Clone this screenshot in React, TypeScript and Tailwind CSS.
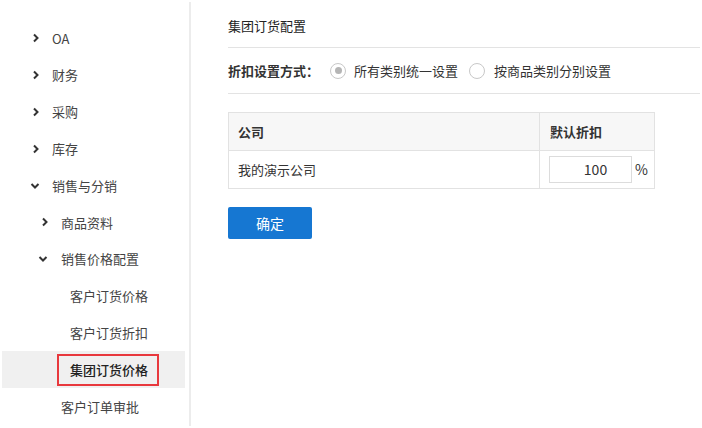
import React from "react";

const font = { fontFamily: '"Noto Sans CJK SC", "Noto Sans", sans-serif' };

function ChevRight({ className = "" }: { className?: string }) {
  return (
    <svg width="8" height="10" viewBox="0 0 8 10" className={className}>
      <path d="M2 1.5 L5.5 5 L2 8.5" fill="none" stroke="#333" strokeWidth="2" />
    </svg>
  );
}
function ChevDown({ className = "" }: { className?: string }) {
  return (
    <svg width="10" height="8" viewBox="0 0 10 8" className={className}>
      <path d="M1.5 2 L5 5.5 L8.5 2" fill="none" stroke="#333" strokeWidth="2" />
    </svg>
  );
}

type Item = { label: string; icon?: "r" | "d"; iconX: number; textX: number; active?: boolean };

const items: Item[] = [
  { label: "OA", icon: "r", iconX: 32, textX: 52 },
  { label: "财务", icon: "r", iconX: 32, textX: 52 },
  { label: "采购", icon: "r", iconX: 32, textX: 52 },
  { label: "库存", icon: "r", iconX: 32, textX: 52 },
  { label: "销售与分销", icon: "d", iconX: 30, textX: 52 },
  { label: "商品资料", icon: "r", iconX: 41, textX: 61 },
  { label: "销售价格配置", icon: "d", iconX: 38, textX: 61 },
  { label: "客户订货价格", iconX: 0, textX: 70 },
  { label: "客户订货折扣", iconX: 0, textX: 70 },
  { label: "集团订货价格", iconX: 0, textX: 70, active: true },
  { label: "客户订单审批", iconX: 0, textX: 61 },
];

export default function App() {
  return (
    <div className="w-[702px] h-[428px] bg-white flex text-[13px] text-[#333] overflow-hidden" style={font}>
      <div className="w-[191px] shrink-0 py-[2px] flex">
        <div className="w-[189px] pt-[18px] pl-[2px] pr-[4px] text-[#444]">
          {items.map((it) => (
            <div
              key={it.label}
              className={`h-[36.8px] flex items-center relative ${it.active ? "bg-[#f0f0f0]" : ""}`}
            >
              {it.icon && (
                <span className="absolute top-1/2 -translate-y-1/2 flex" style={{ left: it.iconX - 2 }}>
                  {it.icon === "r" ? <ChevRight /> : <ChevDown />}
                </span>
              )}
              {it.active ? (
                <span className="ml-[55px] h-[32px] w-[102px] border-2 border-[#e8383d] flex items-center pl-[11px] text-[#222] font-medium">
                  {it.label}
                </span>
              ) : (
                <span style={{ marginLeft: it.textX - 2 }}>{it.label}</span>
              )}
            </div>
          ))}
        </div>
        <div className="w-[2px] bg-[#ececec] h-full" />
      </div>
      <div className="flex-1 pl-[37px] pr-[2px]">
        <div className="h-[48px] border-b border-[#e3e3e3] flex items-center pt-[5px] text-[#222]">
          集团订货配置
        </div>
        <div className="h-[46px] border-b border-[#e3e3e3] flex items-center">
          <span className="font-bold text-[#333]">折扣设置方式：</span>
          <span className="ml-[11px] w-[16px] h-[16px] rounded-full border border-[#c8c8c8] flex items-center justify-center">
            <span className="w-[7px] h-[7px] rounded-full bg-[#b5b5b5]" />
          </span>
          <span className="ml-[8px]">所有类别统一设置</span>
          <span className="ml-[11px] w-[16px] h-[16px] rounded-full border border-[#c8c8c8]" />
          <span className="ml-[9px]">按商品类别分别设置</span>
        </div>
        <div className="mt-[18px] w-[427px] border border-[#e2e2e2]">
          <div className="flex h-[38px] bg-[#f7f7f7] border-b border-[#e2e2e2] font-bold">
            <div className="w-[311px] border-r border-[#e2e2e2] flex items-center pl-[9px]">公司</div>
            <div className="flex-1 flex items-center pl-[10px]">默认折扣</div>
          </div>
          <div className="flex h-[37px]">
            <div className="w-[311px] border-r border-[#e2e2e2] flex items-center pl-[9px]">我的演示公司</div>
            <div className="flex-1 flex items-center pl-[9px]">
              <div className="w-[83px] h-[27px] border border-[#dcdcdc] flex items-center justify-center text-[14px] pl-[10px]">
                100
              </div>
              <span className="ml-[3px] text-[14px]">%</span>
            </div>
          </div>
        </div>
        <button className="mt-[18px] w-[84px] h-[32px] bg-[#1677d2] rounded-[2px] text-white text-[14px] flex items-center justify-center">
          确定
        </button>
      </div>
    </div>
  );
}
